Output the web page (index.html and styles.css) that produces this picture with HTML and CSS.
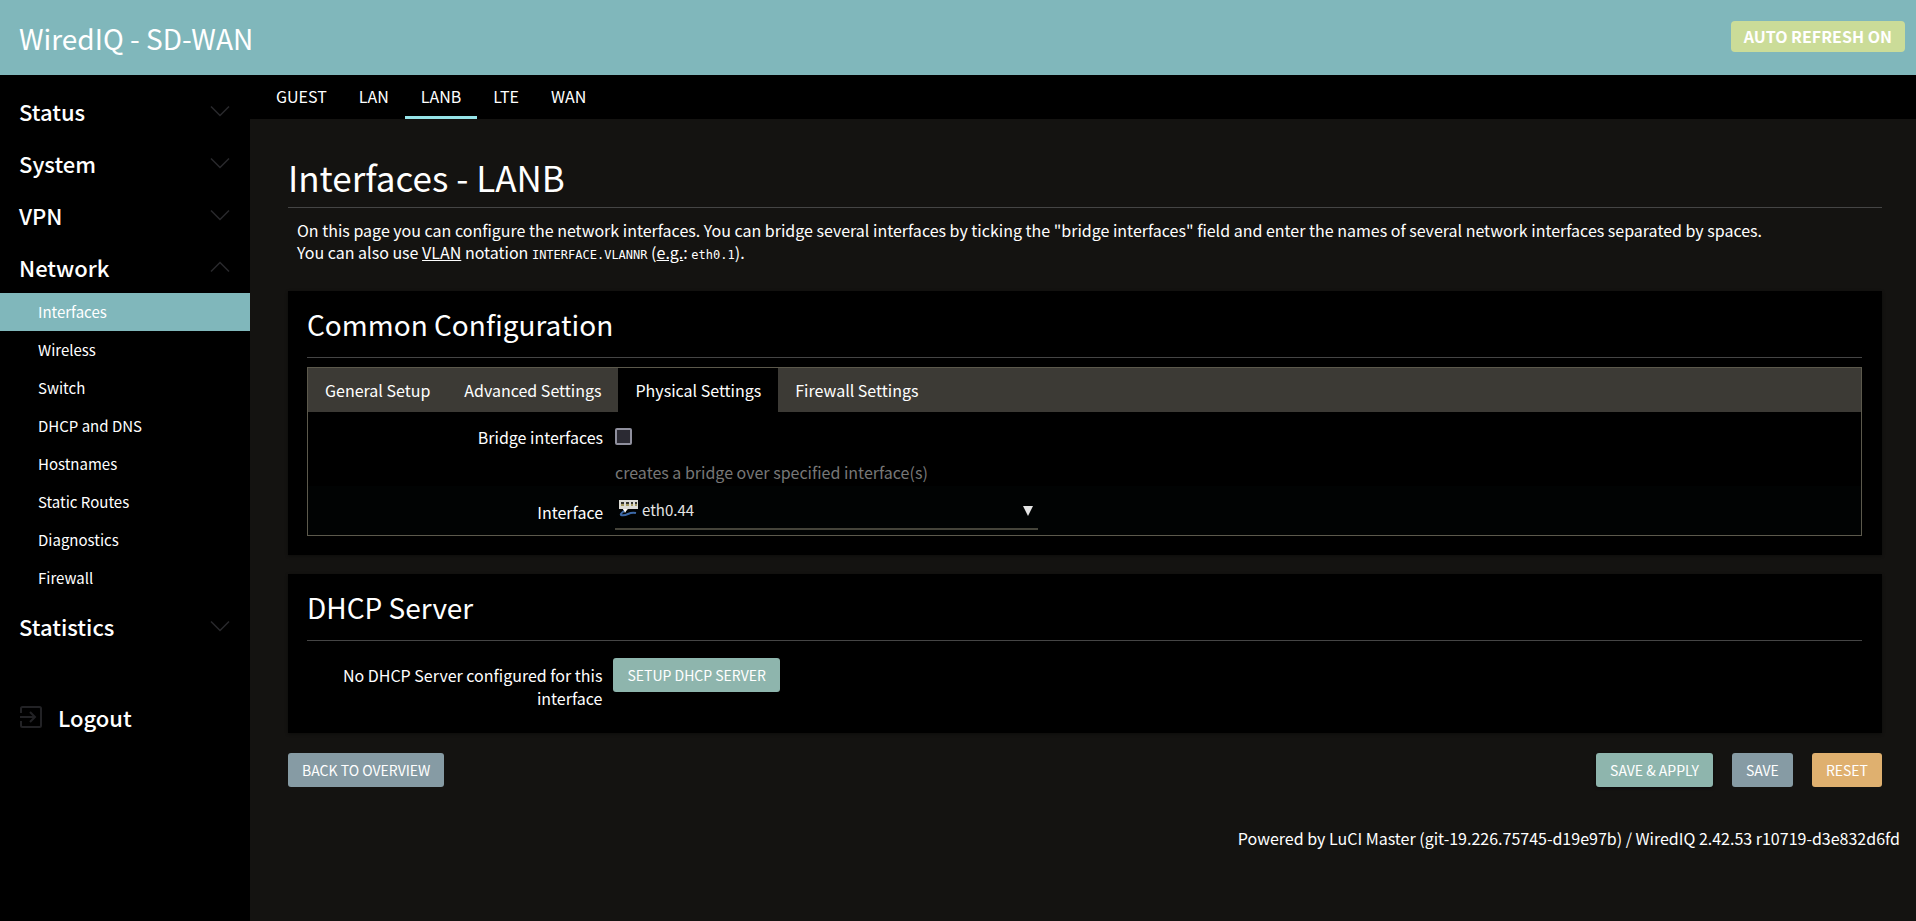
FILE: index.html
```html
<!DOCTYPE html>
<html lang="en">
<head>
<meta charset="utf-8">
<title>WiredIQ - SD-WAN - Interfaces - LuCI</title>
<link rel="stylesheet" href="styles.css">
</head>
<body>
<svg class="sprite" aria-hidden="true">
  <symbol id="chevron" viewBox="0 0 20 12"><path d="M1 1.500L10 10.500L19 1.500" fill="none" stroke="currentColor" stroke-width="1.500"/></symbol>
</svg>
<header class="topbar">
  <a class="brand" href="#">WiredIQ - SD-WAN</a>
  <button class="refresh" type="button">AUTO REFRESH ON</button>
</header>
<div class="shell">
  <nav class="sidebar" aria-label="Main menu">
    <ul class="menu">
      <li><a class="menu-head" href="#">Status<svg class="chevron"><use href="#chevron"/></svg></a></li>
      <li><a class="menu-head" href="#">System<svg class="chevron"><use href="#chevron"/></svg></a></li>
      <li><a class="menu-head" href="#">VPN<svg class="chevron"><use href="#chevron"/></svg></a></li>
      <li>
        <a class="menu-head" href="#">Network<svg class="chevron chevron-open"><use href="#chevron"/></svg></a>
        <ul class="submenu">
          <li><a class="sub-link sub-active" href="#">Interfaces</a></li>
          <li><a class="sub-link" href="#">Wireless</a></li>
          <li><a class="sub-link" href="#">Switch</a></li>
          <li><a class="sub-link" href="#">DHCP and DNS</a></li>
          <li><a class="sub-link" href="#">Hostnames</a></li>
          <li><a class="sub-link" href="#">Static Routes</a></li>
          <li><a class="sub-link" href="#">Diagnostics</a></li>
          <li><a class="sub-link" href="#">Firewall</a></li>
        </ul>
      </li>
      <li><a class="menu-head" href="#">Statistics<svg class="chevron"><use href="#chevron"/></svg></a></li>
    </ul>
    <a class="logout" href="#">
      <svg class="logout-icon" viewBox="0 0 22 22" fill="none" stroke="currentColor" stroke-width="2"><path d="M1 7V2.500Q1 1 2.500 1H19.500Q21 1 21 2.500V19.500Q21 21 19.500 21H2.500Q1 21 1 19.500V15M0 11H14M10 6L15 11L10 16"/></svg>
      Logout
    </a>
  </nav>
  <main class="main">
    <nav class="iface-tabs" aria-label="Interfaces">
      <a class="iface-tab" href="#">GUEST</a>
      <a class="iface-tab" href="#">LAN</a>
      <a class="iface-tab iface-active" href="#">LANB</a>
      <a class="iface-tab" href="#">LTE</a>
      <a class="iface-tab" href="#">WAN</a>
    </nav>
    <form class="content">
      <h1 class="page-title">Interfaces - LANB</h1>
      <p class="intro">On this page you can configure the network interfaces. You can bridge several interfaces by ticking the "bridge interfaces" field and enter the names of several network interfaces separated by spaces.<br>You can also use <abbr class="abbr">VLAN</abbr> notation <code class="code">INTERFACE.VLANNR</code> (<abbr class="abbr">e.g.</abbr>: <code class="code">eth0.1</code>).</p>

      <section class="panel">
        <h2 class="panel-title">Common Configuration</h2>
        <div class="tabbox">
          <div class="tabs">
            <a class="tab" href="#">General Setup</a>
            <a class="tab" href="#">Advanced Settings</a>
            <a class="tab tab-active" href="#">Physical Settings</a>
            <a class="tab" href="#">Firewall Settings</a>
          </div>
          <div class="row">
            <label class="label" for="bridge">Bridge interfaces</label>
            <div class="field">
              <input class="check" type="checkbox" id="bridge">
              <div class="hint">creates a bridge over specified interface(s)</div>
            </div>
          </div>
          <div class="row row-alt">
            <label class="label" for="iface">Interface</label>
            <div class="field">
              <div class="picker">
                <svg class="eth-icon" viewBox="0 0 19 17"><path d="M0 0H19V9H9L6 12L4 9H0Z" fill="#dcdcd6"/><path d="M2 2h3v2h-3zM7 2h3v2h-3zM12 2h2v2h-2zM16 2h2v2h-2z" fill="#34342e"/><path d="M2 4h3v2h-3zM7 4h3v2h-3zM12 4h2v2h-2zM16 4h2v2h-2z" fill="#a39b62"/><path d="M4 9L6 13L8 9Z" fill="#fff"/><path d="M5 11Q1 14 2 15Q5 16 9 14Q13 12 17 13" fill="none" stroke="#3c69a8" stroke-width="2"/></svg>
                <select class="select" id="iface"><option>eth0.44</option></select>
                <svg class="arrow" viewBox="0 0 10 10"><path d="M0 0H10L5 10Z" fill="#e4e4e4"/></svg>
              </div>
            </div>
          </div>
        </div>
      </section>

      <section class="panel panel-dhcp">
        <h2 class="panel-title">DHCP Server</h2>
        <div class="row row-dhcp">
          <div class="label">No DHCP Server configured for this interface</div>
          <div class="field"><button class="btn btn-apply" type="button">SETUP DHCP SERVER</button></div>
        </div>
      </section>

      <div class="actions">
        <button class="btn btn-plain" type="button">BACK TO OVERVIEW</button>
        <div class="actions-right">
          <button class="btn btn-apply" type="button">SAVE &amp; APPLY</button>
          <button class="btn btn-plain" type="button">SAVE</button>
          <button class="btn btn-reset" type="button">RESET</button>
        </div>
      </div>
    </form>
    <footer class="footer">Powered by LuCI Master (git-19.226.75745-d19e97b) / WiredIQ 2.42.53 r10719-d3e832d6fd</footer>
  </main>
</div>
</body>
</html>
```
FILE: styles.css
```css
* { box-sizing: border-box; }

body {
  margin: 0;
  min-height: 100vh;
  display: flex;
  flex-direction: column;
  background: #141311;
  color: #fff;
  font-family: "Noto Sans CJK SC", "Noto Sans", sans-serif;
  font-size: 16px;
  line-height: 22px;
}

a { color: inherit; text-decoration: none; }
ul { list-style: none; margin: 0; padding: 0; }
button, select { font-family: inherit; }

.sprite { display: none; }

.topbar {
  display: flex;
  align-items: center;
  justify-content: space-between;
  min-height: 75px;
  padding: 0 11px 0 19px;
  background: #80b7bb;
}
.brand { font-size: 28px; line-height: 40px; }
.refresh {
  padding: 4px 13px 5px;
  margin-bottom: 2px;
  border: 0;
  border-radius: 4px;
  background: #cbdc98;
  color: #fff;
  font-size: 16px;
  line-height: 22px;
  font-weight: 700;
}

.shell { flex: 1; display: flex; }

.sidebar {
  flex: 0 0 250px;
  padding-top: 10px;
  background: #000;
}
.menu-head {
  display: flex;
  align-items: center;
  justify-content: space-between;
  padding: 10px 20px 10px 19px;
  font-size: 22px;
  line-height: 32px;
  font-weight: 500;
}
.chevron { width: 20px; height: 12px; color: #29292c; }
.chevron-open { transform: rotate(180deg); }
.submenu { padding-bottom: 3px; }
.sub-link { display: block; padding: 8px 38px; font-size: 15px; }
.sub-active { background: #80b7bb; }
.logout {
  display: flex;
  align-items: center;
  gap: 16px;
  padding: 49px 20px 20px;
  font-size: 22px;
  line-height: 32px;
  font-weight: 500;
}
.logout-icon { width: 22px; height: 22px; color: #222225; }

.main { flex: 1; min-width: 0; }
.iface-tabs {
  display: flex;
  padding-left: 10px;
  background: #000;
}
.iface-tab { padding: 10px 16px 9px; border-bottom: 3px solid transparent; }
.iface-active { border-bottom-color: #96e4e8; }

.content { padding: 32px 34px 0 38px; }
.page-title {
  margin: 0;
  padding-bottom: 4px;
  border-bottom: 1px solid #454545;
  font-size: 35px;
  line-height: 52px;
  font-weight: 400;
}
.intro { margin: 0; padding: 11px 9px 28px; }
.abbr { text-decoration: underline; }
.code { font-family: "DejaVu Sans Mono", monospace; font-size: 12px; line-height: 1; }

.panel {
  padding: 13px 20px 19px 19px;
  background: #000;
  box-shadow: 0 1px 3px rgba(0, 0, 0, 0.4);
}
.panel-dhcp { margin-top: 19px; padding-bottom: 23px; }
.panel-title {
  margin: 0;
  padding-bottom: 13px;
  border-bottom: 1px solid #454545;
  font-size: 28px;
  line-height: 40px;
  font-weight: 400;
}
.tabbox { margin-top: 9px; border: 1px solid #5c594c; }
.tabs { display: flex; background: #3c3a35; }
.tab { padding: 11px 17px; }
.tab-active { background: #000; }

.row { display: flex; gap: 12px; padding: 13px 0 3px; }
.row-alt { padding: 5px 0; background: #010303; }
.row-dhcp { gap: 11px; padding: 17px 0 0; }
.label { flex: 0 0 19%; text-align: right; }
.row .label { padding-top: 1px; }
.row-alt .label { padding-top: 10px; }
.row-dhcp .label { padding: 6px 0 0 20px; line-height: 23px; }
.field { flex: 1; min-width: 0; }
.check {
  appearance: none;
  display: block;
  width: 17px;
  height: 17px;
  margin: 3px 0 16px;
  border: 2px solid #8f8f9d;
  border-radius: 2px;
  background: #2b2a33;
}
.hint { color: #777; }

.picker { position: relative; max-width: 423px; }
.select {
  appearance: none;
  display: block;
  width: 100%;
  height: 39px;
  padding: 0 24px 0 27px;
  border: 0;
  border-bottom: 2px solid #45443a;
  background: transparent;
  color: #e4e4e4;
  font-size: 15px;
}
.eth-icon { position: absolute; left: 4px; top: 9px; width: 19px; height: 17px; }
.arrow { position: absolute; right: 5px; top: 15px; width: 10px; height: 10px; }

.btn {
  min-height: 34px;
  padding: 0 14px;
  border: 0;
  border-radius: 3px;
  color: #fff;
  font-size: 14px;
  line-height: 20px;
}
.btn-apply { background: #8eb5ad; box-shadow: 0 1px 3px rgba(0, 0, 0, 0.5); }
.btn-plain { background: #869ba4; }
.btn-reset { background: #dfb06f; }

.actions { display: flex; justify-content: space-between; margin-top: 20px; }
.actions-right { display: flex; gap: 19px; }
.footer { padding: 40px 16px 20px; text-align: right; }
```
